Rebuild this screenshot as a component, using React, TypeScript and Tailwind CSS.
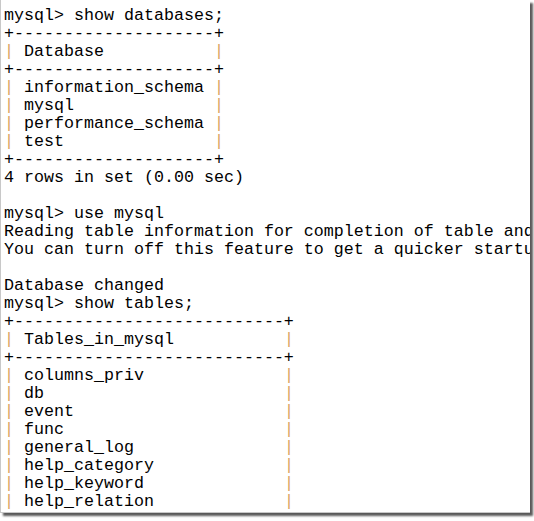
const lines = [
  "mysql> show databases;",
  "+--------------------+",
  "| Database           |",
  "+--------------------+",
  "| information_schema |",
  "| mysql              |",
  "| performance_schema |",
  "| test               |",
  "+--------------------+",
  "4 rows in set (0.00 sec)",
  "",
  "mysql> use mysql",
  "Reading table information for completion of table and column names",
  "You can turn off this feature to get a quicker startup with -A",
  "",
  "Database changed",
  "mysql> show tables;",
  "+---------------------------+",
  "| Tables_in_mysql           |",
  "+---------------------------+",
  "| columns_priv              |",
  "| db                        |",
  "| event                     |",
  "| func                      |",
  "| general_log               |",
  "| help_category             |",
  "| help_keyword              |",
  "| help_relation             |",
];

function Line({ text }: { text: string }) {
  // pipes are drawn in the tan colour the console uses for box edges
  const parts = text.split(/(\|)/g);
  return (
    <div className="h-[18px] whitespace-pre">
      {text === "" ? " " : parts.map((p, i) =>
        p === "|" ? <span key={i} className="text-[#d9a35f]">|</span> : <span key={i}>{p}</span>
      )}
    </div>
  );
}

export default function App() {
  return (
    <div className="w-[534px] h-[521px] bg-white">
      <div className="w-[530px] h-[513px] overflow-hidden bg-white border-l border-b border-[#c8c8c8] shadow-[3px_3px_2px_rgba(0,0,0,0.65)]">
        <div
          className="pt-[7px] pl-[3px] text-black text-[16.667px] leading-[18px]"
          style={{ fontFamily: '"Courier New", "Liberation Mono", monospace' }}
        >
          {lines.map((l, i) => <Line key={i} text={l} />)}
        </div>
      </div>
    </div>
  );
}
